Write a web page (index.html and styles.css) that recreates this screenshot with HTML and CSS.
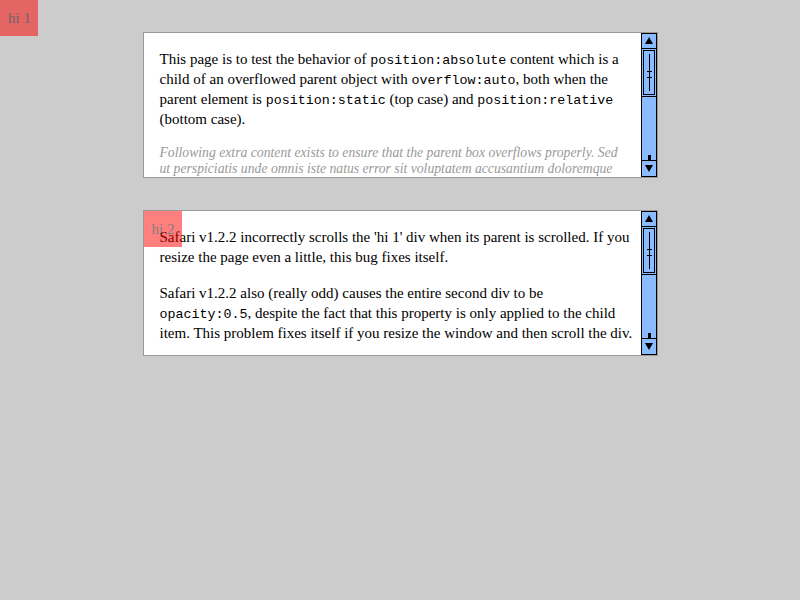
FILE: index.html
```html
<!DOCTYPE html>
<html>
<head>
<meta charset="utf-8">
<title>position:absolute in overflow:auto</title>
<link rel="stylesheet" href="styles.css">
</head>
<body>
<div class="box">
  <div class="content">
    <div class="hi hi-page">hi 1</div>
    <p>This page is to test the behavior of <code>position:absolute</code> content which is a child of an overflowed parent object with <code>overflow:auto</code>, both when the parent element is <code>position:static</code> (top case) and <code>position:relative</code> (bottom case).</p>
    <p class="extra">Following extra content exists to ensure that the parent box overflows properly. Sed ut perspiciatis unde omnis iste natus error sit voluptatem accusantium doloremque laudantium, totam rem aperiam, eaque ipsa quae ab illo inventore veritatis et quasi architecto beatae vitae dicta sunt explicabo.</p>
  </div>
  <svg class="scrollbar" width="16" height="144" viewBox="0 0 16 144">
    <rect x="0.5" y="0.5" width="15" height="143" fill="#8bbcff" stroke="#000"/>
    <rect x="0.5" y="0.5" width="15" height="15" fill="#8bbcff" stroke="#000"/>
    <polygon points="8,4 4,11 12,11" fill="#000"/>
    <rect x="0.5" y="15.5" width="15" height="48" fill="#8bbcff" stroke="#000"/>
    <rect x="2.5" y="17.5" width="11" height="44" fill="none" stroke="#000"/>
    <line x1="8.5" y1="21" x2="8.5" y2="58" stroke="#000"/>
    <line x1="6" y1="38.5" x2="11" y2="38.5" stroke="#000"/>
    <line x1="6" y1="44.5" x2="11" y2="44.5" stroke="#000"/>
    <rect x="7" y="122" width="3" height="6" fill="#000"/>
    <rect x="0.5" y="127.5" width="15" height="16" fill="#8bbcff" stroke="#000"/>
    <polygon points="4,132 12,132 8,139" fill="#000"/>
  </svg>
</div>
<div class="box box-rel">
  <div class="content">
    <div class="hi hi-box">hi 2</div>
    <p>Safari v1.2.2 incorrectly scrolls the 'hi 1' div when its parent is scrolled. If you resize the page even a little, this bug fixes itself.</p>
    <p>Safari v1.2.2 also (really odd) causes the entire second div to be <code>opacity:0.5</code>, despite the fact that this property is only applied to the child item. This problem fixes itself if you resize the window and then scroll the div.</p>
  </div>
  <svg class="scrollbar" width="16" height="144" viewBox="0 0 16 144">
    <rect x="0.5" y="0.5" width="15" height="143" fill="#8bbcff" stroke="#000"/>
    <rect x="0.5" y="0.5" width="15" height="15" fill="#8bbcff" stroke="#000"/>
    <polygon points="8,4 4,11 12,11" fill="#000"/>
    <rect x="0.5" y="15.5" width="15" height="48" fill="#8bbcff" stroke="#000"/>
    <rect x="2.5" y="17.5" width="11" height="44" fill="none" stroke="#000"/>
    <line x1="8.5" y1="21" x2="8.5" y2="58" stroke="#000"/>
    <line x1="6" y1="38.5" x2="11" y2="38.5" stroke="#000"/>
    <line x1="6" y1="44.5" x2="11" y2="44.5" stroke="#000"/>
    <rect x="7" y="122" width="3" height="6" fill="#000"/>
    <rect x="0.5" y="127.5" width="15" height="16" fill="#8bbcff" stroke="#000"/>
    <polygon points="4,132 12,132 8,139" fill="#000"/>
  </svg>
</div>
</body>
</html>
```

FILE: styles.css
```css
html, body {
  margin: 0;
  padding: 0;
  background: #cccccc;
}
body {
  font-family: "Liberation Serif", "Times New Roman", serif;
  font-size: 15px;
  line-height: 20px;
  color: #000;
  padding-top: 32px;
}
.box {
  width: 513px;
  height: 144px;
  margin: 0 auto 32px;
  border: 1px solid #999999;
  background: #fff;
  display: flex;
}
.box-rel {
  position: relative;
}
.content {
  flex: 1;
  min-width: 0;
  padding: 16px 8px 0 16px;
  overflow: hidden;
}
.content p {
  margin: 0 0 16px 0;
}
code {
  font-family: "Liberation Mono", "Courier New", monospace;
  font-size: 13.33px;
  line-height: 1;
}
.extra {
  font-style: italic;
  color: #999999;
  font-size: 13.7px;
  line-height: 16px;
  margin-right: 10px !important;
}
.scrollbar {
  display: block;
  flex: none;
}
.hi {
  position: absolute;
  top: 0;
  left: 0;
  padding: 8px;
  width: 22px;
  height: 20px;
  line-height: 20px;
  font-size: 15px;
  background: #ff0000;
  color: #000;
  opacity: 0.5;
  white-space: nowrap;
}
```
